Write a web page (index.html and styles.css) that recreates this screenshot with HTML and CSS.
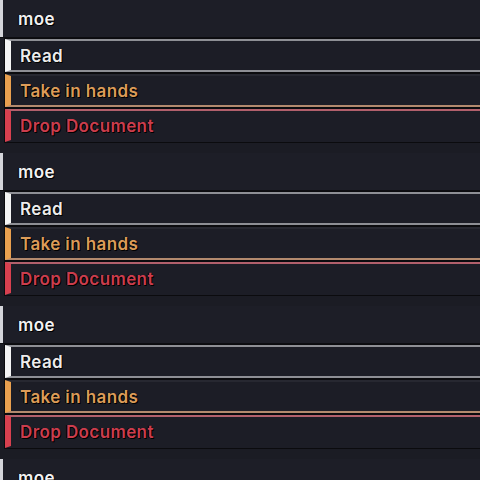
FILE: index.html
```html
<!DOCTYPE html>
<html lang="en">
<head>
    <meta charset="UTF-8">
    <meta name="viewport" content="width=device-width, initial-scale=1.0">
    <title>Context Menu</title>
    <link rel="stylesheet" href="styles.css">
</head>
<body>
    <div class="menu">
        <div class="group">
            <div class="header">moe</div>
            <div class="item read">Read</div>
            <div class="item take">Take in hands</div>
            <div class="item drop">Drop Document</div>
        </div>
        <div class="group">
            <div class="header">moe</div>
            <div class="item read">Read</div>
            <div class="item take">Take in hands</div>
            <div class="item drop">Drop Document</div>
        </div>
        <div class="group">
            <div class="header">moe</div>
            <div class="item read">Read</div>
            <div class="item take">Take in hands</div>
            <div class="item drop">Drop Document</div>
        </div>
        <div class="group">
            <div class="header">moe</div>
            <div class="item read">Read</div>
            <div class="item take">Take in hands</div>
            <div class="item drop">Drop Document</div>
        </div>
    </div>
</body>
</html>
```

FILE: styles.css
```css
* {
    margin: 0;
    padding: 0;
    box-sizing: border-box;
}

body {
    font-family: 'Inter', 'Noto Sans', sans-serif;
    background: #1b1c24;
    color: #f2f2f2;
    height: 100vh;
    overflow: hidden;
}

.menu {
    display: flex;
    flex-direction: column;
}

.group {
    display: flex;
    flex-direction: column;
    gap: 2px;
    padding-bottom: 11px;
}

.header {
    height: 37px;
    display: flex;
    align-items: center;
    padding-left: 15px;
    border-left: 3px solid #d4d5da;
    background: #1d1e27;
    font-size: 17px;
    font-weight: 600;
    letter-spacing: 0.4px;
    text-shadow: 1px 1px 0 #000, -1px 0 0 #000;
    box-shadow: 0 1px 0 #0d0d11;
}

.item {
    height: 33px;
    margin-left: 5px;
    display: flex;
    align-items: center;
    padding-left: 9px;
    background: #1c1d26;
    border-left: 6px solid;
    border-top: 2px solid;
    border-bottom: 2px solid;
    font-size: 17px;
    font-weight: 600;
    letter-spacing: 0.4px;
    text-shadow: 1px 1px 0 #000, -1px 0 0 #000;
    box-shadow: 0 0 0 1px #0b0b0e;
}

.read {
    color: #ececec;
    border-left-color: #f4f4f4;
    border-top-color: #8e8f95;
    border-bottom-color: #8e8f95;
}

.take {
    color: #dc9c58;
    border-left-color: #e9a04f;
    border-top-color: #272831;
    border-bottom-color: #b38a6e;
}

.drop {
    color: #cc3d4d;
    border-left-color: #d8404f;
    border-top-color: #b2606c;
    border-bottom-color: #1c1d26;
}
```
